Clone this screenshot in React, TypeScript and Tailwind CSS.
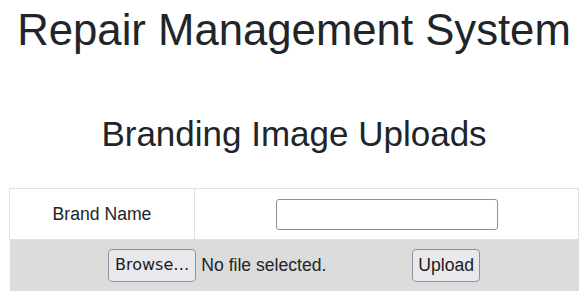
const App = () => {
    return (
        <div className="min-h-screen bg-white text-[#212529] font-['Liberation_Sans',Arial,sans-serif]">
            <h1 className="pt-[4px] text-center text-[43.7px] leading-[52.8px] font-normal">Repair Management System</h1>

            <h2 className="mt-[56px] text-center text-[35px] leading-[42.2px] font-normal">Branding Image Uploads</h2>

            <div className="mt-[33px] px-[9px]">
                <table className="w-full border-collapse text-[17.6px]">
                    <tbody>
                        <tr className="h-[51px]">
                            <td className="w-[185px] border border-[#dee2e6] text-center align-middle">Brand Name</td>
                            <td className="border border-[#dee2e6] text-center align-middle">
                                <input
                                    type="text"
                                    className="w-[222px] h-[31px] rounded-[3px] border border-[#8f8f9d] bg-white align-middle"
                                />
                            </td>
                        </tr>
                        <tr className="h-[51px] bg-[#dcdcdc]">
                            <td colSpan={2} className="align-middle">
                                <div className="flex items-center justify-center">
                                    <button className="h-[33px] px-[6px] rounded-[4px] border border-[#8f8f9d] bg-[#e9e9ed] font-['DejaVu_Sans',sans-serif] text-[16px] text-[#1b1b1b]">
                                        Browse…
                                    </button>
                                    <span className="ml-[5px] w-[211px]">No file selected.</span>
                                    <button className="h-[33px] px-[5px] rounded-[4px] border border-[#8f8f9d] bg-[#e9e9ed] text-[#1b1b1b]">
                                        Upload
                                    </button>
                                </div>
                            </td>
                        </tr>
                    </tbody>
                </table>
            </div>
        </div>
    );
};

export default App;
